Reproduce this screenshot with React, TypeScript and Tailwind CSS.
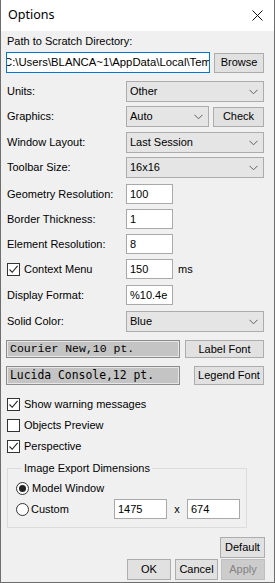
import React from "react";

const Chevron = () => (
  <svg width="9" height="6" viewBox="0 0 9 6" className="shrink-0">
    <path d="M0.5 0.8 L4.5 4.8 L8.5 0.8" fill="none" stroke="#606060" strokeWidth="1" />
  </svg>
);

const Select = ({ value, w = "w-[138px]" }: { value: string; w?: string }) => (
  <div className={`${w} h-[21px] bg-[#e5e5e5] border border-[#acacac] flex items-center justify-between pl-[3px] pr-[5px]`}>
    <span>{value}</span>
    <Chevron />
  </div>
);

const Btn = ({ label, w, h = "h-[21px]", disabled = false }: { label: string; w: string; h?: string; disabled?: boolean }) => (
  <div
    className={`${w} ${h} flex items-center justify-center border ${
      disabled ? "bg-[#cccccc] border-[#bfbfbf] text-[#838383]" : "bg-[#e1e1e1] border-[#adadad] text-black"
    }`}
  >
    {label}
  </div>
);

const Input = ({ value, w = "w-[47px]" }: { value: string; w?: string }) => (
  <div className={`${w} h-[20px] bg-white border border-[#a9a9a9] flex items-center pl-[3px]`}>{value}</div>
);

const Check = ({ checked }: { checked: boolean }) => (
  <div className="w-[13px] h-[13px] bg-white border border-[#333333] flex items-center justify-center shrink-0">
    {checked && (
      <svg width="11" height="11" viewBox="0 0 11 11">
        <path d="M1.5 5.5 L4.2 8.3 L9.6 1.8" fill="none" stroke="#222" strokeWidth="1.1" />
      </svg>
    )}
  </div>
);

const Radio = ({ checked }: { checked: boolean }) => (
  <div className="w-[13px] h-[13px] rounded-full bg-white border border-[#333333] flex items-center justify-center shrink-0">
    {checked && <div className="w-[7px] h-[7px] rounded-full bg-[#222]" />}
  </div>
);

const LabelRow = ({ label, children, mt, h = "h-[21px]" }: { label: React.ReactNode; children: React.ReactNode; mt: string; h?: string }) => (
  <div className={`flex items-center ${h} ${mt}`}>
    <div className="w-[120px] pl-[1px]">{label}</div>
    {children}
  </div>
);

export default function App() {
  return (
    <div className="w-[275px] h-[583px] bg-[#f0f0f0] border-l border-r border-b border-[#6e6e6e] font-['Liberation_Sans',Arial,sans-serif] text-[11px] text-black flex flex-col overflow-hidden">
      <div className="h-[31px] bg-white flex items-center justify-between pl-[7px] pr-[11px] shrink-0">
        <span className="text-[12.5px] font-['Noto_Sans',sans-serif]">Options</span>
        <svg width="11" height="11" viewBox="0 0 11 11">
          <path d="M0.5 0.5 L10.5 10.5 M10.5 0.5 L0.5 10.5" stroke="#111" strokeWidth="1" />
        </svg>
      </div>
      <div className="pl-[5px] pr-[10px] flex flex-col">
        <div className="h-[21px] flex items-center pl-[1px]">Path to Scratch Directory:</div>
        <div className="h-[21px] flex items-center justify-between">
          <div className="w-[204px] h-[21px] bg-white border border-[#0078d7] overflow-hidden flex items-center whitespace-nowrap">
            <span className="-ml-[3px] text-[11.3px]">C:\Users\BLANCA~1\AppData\Local\Temp</span>
          </div>
          <Btn label="Browse" w="w-[50px]" h="h-[20px]" />
        </div>
        <LabelRow label="Units:" mt="mt-[8px]">
          <Select value="Other" />
        </LabelRow>
        <LabelRow label="Graphics:" mt="mt-[4px]">
          <div className="flex items-center justify-between w-[138px]">
            <Select value="Auto" w="w-[83px]" />
            <Btn label="Check" w="w-[51px]" h="h-[20px]" />
          </div>
        </LabelRow>
        <LabelRow label="Window Layout:" mt="mt-[5px]">
          <Select value="Last Session" />
        </LabelRow>
        <LabelRow label="Toolbar Size:" mt="mt-[4px]">
          <Select value="16x16" />
        </LabelRow>
        <LabelRow label="Geometry Resolution:" mt="mt-[6px]" h="h-[20px]">
          <Input value="100" />
        </LabelRow>
        <LabelRow label="Border Thickness:" mt="mt-[5px]" h="h-[20px]">
          <Input value="1" />
        </LabelRow>
        <LabelRow label="Element Resolution:" mt="mt-[5px]" h="h-[20px]">
          <Input value="8" />
        </LabelRow>
        <LabelRow
          label={
            <div className="flex items-center gap-[4px]">
              <Check checked />
              <span>Context Menu</span>
            </div>
          }
          mt="mt-[5px]"
          h="h-[20px]"
        >
          <Input value="150" />
          <span className="ml-[5px]">ms</span>
        </LabelRow>
        <LabelRow label="Display Format:" mt="mt-[6px]" h="h-[20px]">
          <Input value="%10.4e" />
        </LabelRow>
        <LabelRow label="Solid Color:" mt="mt-[6px]">
          <Select value="Blue" />
        </LabelRow>
        <div className="flex items-center justify-between h-[18px] mt-[8px]">
          <div className="w-[174px] h-[18px] bg-[#c4c4c4] border border-[#8c8c8c] shadow-[inset_0_0_0_1px_#e6e6e6] flex items-center pl-[3px] font-['Liberation_Mono',monospace] text-[11.5px] whitespace-nowrap overflow-hidden">
            Courier New,10 pt.
          </div>
          <Btn label="Label Font" w="w-[79px]" h="h-[18px]" />
        </div>
        <div className="flex items-center justify-between h-[19px] mt-[8px]">
          <div className="w-[174px] h-[19px] bg-[#c4c4c4] border border-[#8c8c8c] shadow-[inset_0_0_0_1px_#e6e6e6] flex items-center pl-[3px] font-['DejaVu_Sans_Mono',monospace] text-[11.4px] whitespace-nowrap overflow-hidden">
            Lucida Console,12 pt.
          </div>
          <Btn label="Legend Font" w="w-[70px]" h="h-[19px]" />
        </div>
        <div className="flex items-center gap-[4px] h-[20px] mt-[9px] pl-[1px]">
          <Check checked />
          <span>Show warning messages</span>
        </div>
        <div className="flex items-center gap-[4px] h-[20px] mt-[1px] pl-[1px]">
          <Check checked={false} />
          <span>Objects Preview</span>
        </div>
        <div className="flex items-center gap-[4px] h-[20px] mt-[1px] pl-[1px]">
          <Check checked />
          <span>Perspective</span>
        </div>
        <fieldset className="w-[240px] ml-[1px] mt-[5px] border border-[#dcdcdc] pb-[8px] pl-[8px]">
          <legend className="ml-[6px] px-[2px] leading-[14px]">Image Export Dimensions</legend>
          <div className="flex items-center gap-[3px] h-[20px] mt-[3px]">
            <Radio checked />
            <span>Model Window</span>
          </div>
          <div className="flex items-center h-[20px] mt-[1px]">
            <Radio checked={false} />
            <span className="ml-[2px] w-[83px]">Custom</span>
            <Input value="1475" w="w-[53px]" />
            <span className="w-[20px] text-center">x</span>
            <Input value="674" w="w-[53px]" />
          </div>
        </fieldset>
        <div className="flex justify-end mt-[9px] -mr-[1px]">
          <Btn label="Default" w="w-[45px]" />
        </div>
        <div className="flex justify-end mt-[1px] -mr-[1px]">
          <Btn label="OK" w="w-[44px]" />
          <div className="ml-[4px]">
            <Btn label="Cancel" w="w-[43px]" />
          </div>
          <div className="ml-[3px]">
            <Btn label="Apply" w="w-[44px]" disabled />
          </div>
        </div>
      </div>
    </div>
  );
}
